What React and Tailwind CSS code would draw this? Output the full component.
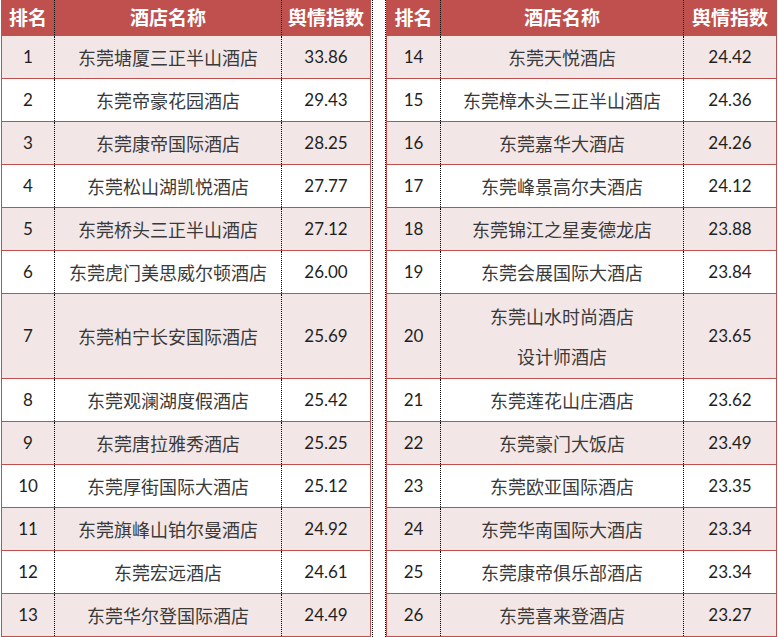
const left = [
  ['1', ['东莞塘厦三正半山酒店'], '33.86'],
  ['2', ['东莞帝豪花园酒店'], '29.43'],
  ['3', ['东莞康帝国际酒店'], '28.25'],
  ['4', ['东莞松山湖凯悦酒店'], '27.77'],
  ['5', ['东莞桥头三正半山酒店'], '27.12'],
  ['6', ['东莞虎门美思威尔顿酒店'], '26.00'],
  ['7', ['东莞柏宁长安国际酒店'], '25.69', true],
  ['8', ['东莞观澜湖度假酒店'], '25.42'],
  ['9', ['东莞唐拉雅秀酒店'], '25.25'],
  ['10', ['东莞厚街国际大酒店'], '25.12'],
  ['11', ['东莞旗峰山铂尔曼酒店'], '24.92'],
  ['12', ['东莞宏远酒店'], '24.61'],
  ['13', ['东莞华尔登国际酒店'], '24.49'],
];

const right = [
  ['14', ['东莞天悦酒店'], '24.42'],
  ['15', ['东莞樟木头三正半山酒店'], '24.36'],
  ['16', ['东莞嘉华大酒店'], '24.26'],
  ['17', ['东莞峰景高尔夫酒店'], '24.12'],
  ['18', ['东莞锦江之星麦德龙店'], '23.88'],
  ['19', ['东莞会展国际大酒店'], '23.84'],
  ['20', ['东莞山水时尚酒店', '设计师酒店'], '23.65', true],
  ['21', ['东莞莲花山庄酒店'], '23.62'],
  ['22', ['东莞豪门大饭店'], '23.49'],
  ['23', ['东莞欧亚国际酒店'], '23.35'],
  ['24', ['东莞华南国际大酒店'], '23.34'],
  ['25', ['东莞康帝俱乐部酒店'], '23.34'],
  ['26', ['东莞喜来登酒店'], '23.27'],
];

const cjk = '[font-family:"Noto_Sans_CJK_SC",sans-serif]';
const num = '[font-family:Lato,"Noto_Sans_CJK_SC",sans-serif]';

function Table({ rows, cols, className }) {
  return (
    <div className={`flex flex-col border-x border-b border-[#c0504d] ${className}`}>
      {/* header */}
      <div className={`grid h-[35px] bg-[#c0504d] ${cols} text-[19px] font-bold text-white ${cjk}`}>
        <div className="flex items-center justify-center">排名</div>
        <div className="flex items-center justify-center border-l border-dotted border-black">酒店名称</div>
        <div className="flex items-center justify-center border-l border-dotted border-black">舆情指数</div>
      </div>
      {rows.map(([rank, name, score, tall], i) => (
        <div
          key={rank}
          className={`grid ${tall ? 'h-[85px]' : 'h-[43px]'} ${cols} border-t border-[#c0504d] ${i % 2 === 0 ? 'bg-[#f3e6e6]' : 'bg-white'}`}
        >
          <div className={`flex items-center justify-center text-[17px] text-[#1f1f1f] ${num}`}>{rank}</div>
          <div className={`flex flex-col items-center justify-center border-l border-dotted border-black text-[18px] leading-[40px] text-[#3a3a3a] ${cjk}`}>
            {name.map((n) => (
              <span key={n}>{n}</span>
            ))}
          </div>
          <div className={`flex items-center justify-center border-l border-dotted border-black text-[17px] text-[#1f1f1f] ${num}`}>{score}</div>
        </div>
      ))}
    </div>
  );
}

export default function App() {
  return (
    <div className="flex h-[637px] w-[778px] overflow-hidden bg-white">
      <Table rows={left} cols="grid-cols-[52px_227px_89px]" className="ml-[1px] w-[370px]" />
      <div className="ml-[1px] w-[14px] border-x border-dotted border-black" />
      <Table rows={right} cols="grid-cols-[53px_243px_93px]" className="w-[391px]" />
    </div>
  );
}
